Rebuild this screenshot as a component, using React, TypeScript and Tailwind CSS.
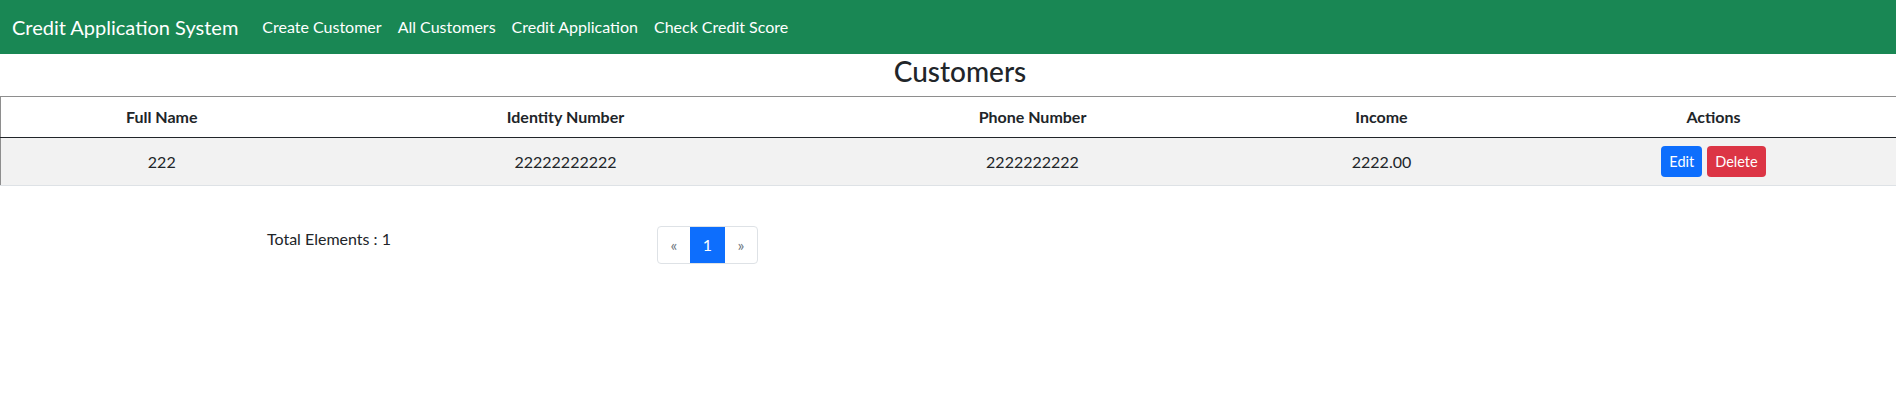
import React from "react";

const customers = [
  { fullName: "222", identity: "22222222222", phone: "2222222222", income: "2222.00" },
];

const navLinks = ["Create Customer", "All Customers", "Credit Application", "Check Credit Score"];

export default function App() {
  return (
    <div className="w-full min-h-[405px] overflow-hidden bg-white font-['Lato',sans-serif] text-[#212529]">
      {/* Navbar */}
      <nav className="h-[54px] bg-[#198754] flex items-center pl-[12px]">
        <span className="text-[20px] text-white mr-[24px]">Credit Application System</span>
        <div className="flex gap-[16px]">
          {navLinks.map((l) => (
            <a key={l} className="text-[16px] text-white">
              {l}
            </a>
          ))}
        </div>
      </nav>

      <div className="w-[1920px]">
        <h3 className="text-center text-[28px] leading-[34px] font-medium mb-[8px]">Customers</h3>

        {/* Customers table */}
        <table className="w-[1920px] table-fixed border-collapse text-[16px]">
          <colgroup>
            <col className="w-[322px]" />
            <col className="w-[486px]" />
            <col className="w-[448px]" />
            <col className="w-[250px]" />
            <col className="w-[414px]" />
          </colgroup>
          <thead>
            <tr className="border-t border-l border-t-[#8e8e8e] border-l-[#8e8e8e] border-b border-b-[#212529]">
              {["Full Name", "Identity Number", "Phone Number", "Income", "Actions"].map((h) => (
                <th key={h} className="py-[8px] leading-[24px] font-bold text-center">
                  {h}
                </th>
              ))}
            </tr>
          </thead>
          <tbody>
            {customers.map((c) => (
              <tr key={c.identity} className="bg-[#f2f2f2] border-l border-l-[#8e8e8e] border-b border-b-[#dee2e6]">
                <td className="py-[8px] text-center align-middle">{c.fullName}</td>
                <td className="py-[8px] text-center align-middle">{c.identity}</td>
                <td className="py-[8px] text-center align-middle">{c.phone}</td>
                <td className="py-[8px] text-center align-middle">{c.income}</td>
                <td className="py-[8px] text-center align-middle">
                  <div className="flex justify-center gap-[5px]">
                    <button className="h-[31px] px-[8px] rounded-[4px] bg-[#0d6efd] text-white text-[14.5px]">Edit</button>
                    <button className="h-[31px] px-[8px] rounded-[4px] bg-[#dc3545] text-white text-[14.5px]">Delete</button>
                  </div>
                </td>
              </tr>
            ))}
          </tbody>
        </table>

        {/* Footer: total + pagination */}
        <div className="flex items-start mt-[40px]">
          <div className="w-[267px]" />
          <p className="w-[390px] pt-[1px] text-[16px] leading-[24px]">Total Elements : 1</p>
          <div className="flex h-[38px] border border-[#dee2e6] rounded-[4px] overflow-hidden text-[16px]">
            <span className="w-[32px] flex items-center justify-center text-[#6c757d]">«</span>
            <span className="w-[35px] flex items-center justify-center bg-[#0d6efd] text-white">1</span>
            <span className="w-[32px] flex items-center justify-center text-[#6c757d]">»</span>
          </div>
        </div>
      </div>
    </div>
  );
}
